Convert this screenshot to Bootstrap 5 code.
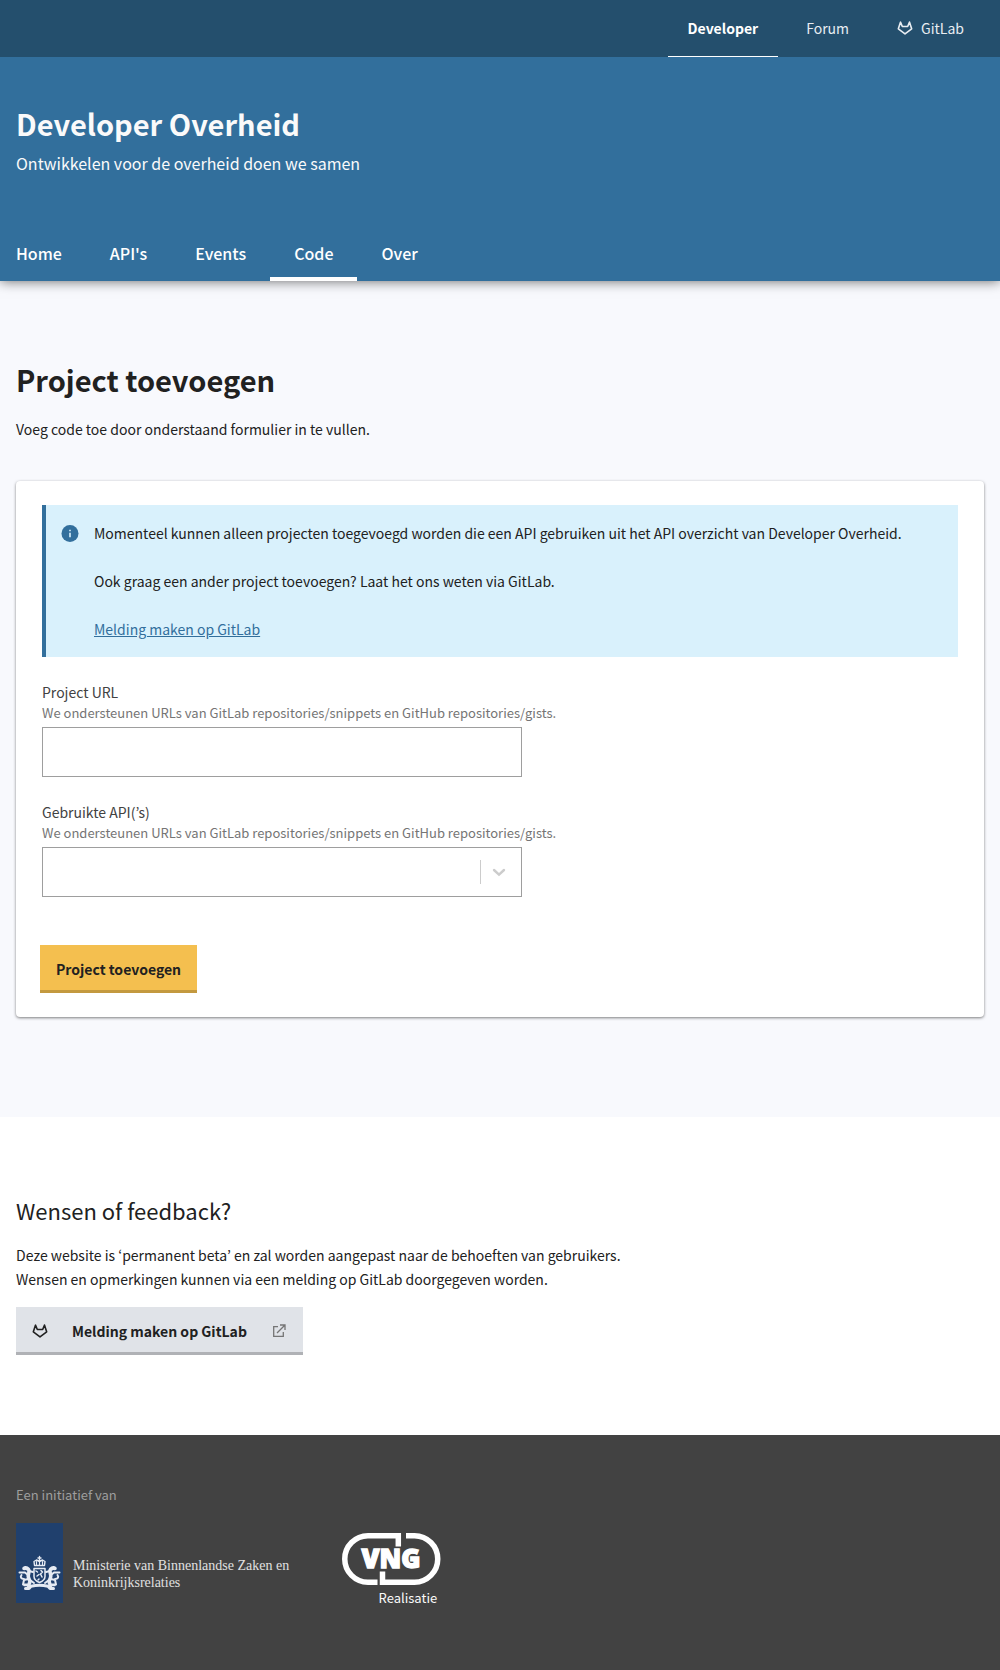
<!DOCTYPE html>
<html lang="nl">
<head>
<meta charset="utf-8">
<meta name="viewport" content="width=device-width, initial-scale=1">
<title>Project toevoegen – Developer Overheid</title>
<link href="https://cdn.jsdelivr.net/npm/bootstrap@5.3.0/dist/css/bootstrap.min.css" rel="stylesheet">
<style>
  body { font-family: "Noto Sans CJK JP", "Open Sans", sans-serif; font-size: 14px; line-height: 24px; color: #212121; background: #fff; }
  h1 { font-size: 29px; line-height: 36px; font-weight: 700; }
  h2 { font-size: 22px; line-height: 34px; font-weight: 400; }
  .site-top { background: #244f6d; position: relative; z-index: 1; }
  .site-top .nav-link { color: #e8edf2; padding: 16px 20px; border-bottom: 1px solid transparent; }
  .site-top .nav-link.active { color: #fff; font-weight: 600; border-color: #fff; }
  .site-header { background: #326f9c; color: #fafafa; box-shadow: 0 0 12px rgba(0,0,0,.6); padding-top: 48px; position: relative; }
  .tagline { font-size: 16px; line-height: 28px; margin-bottom: 48px; }
  .site-nav { margin: 0 -24px; }
  .site-nav .nav-link { color: #fff; font-size: 16px; font-weight: 500; padding: 16px 24px 12px; border-bottom: 4px solid transparent; }
  .site-nav .nav-link.active { border-color: #fff; }
  .site-main { background: #f8f9fd; padding: 80px 0 100px; }
  .page-title { margin-bottom: 20px; }
  .form-card { border-radius: 4px; box-shadow: 0 1px 3px rgba(0,0,0,.5); padding: 24px; background: #fff; }
  .form-body { padding: 0 2px; }
  .info-box { background: #d9f1fc; border-left: 4px solid #326f9c; padding: 16px; margin-bottom: 24px; }
  .info-box a { color: #326f9c; }
  .field-label { color: #424242; line-height: 22px; }
  .field-help { font-size: 13px; line-height: 20px; color: #757575; white-space: nowrap; }
  .field-box { max-width: 480px; }
  .field-box .form-control, .field-box .form-select { height: 50px; border: 1px solid #9e9e9e; border-radius: 0; background: #fff; }
  .select-mark { position: absolute; right: 12px; top: 13px; pointer-events: none; }
  .action { border: 0; border-bottom: 3px solid; border-radius: 0; font-size: 14px; font-weight: 600; line-height: 24px; color: #212121; padding: 12px 16px 9px; }
  .action-main, .action-main:hover { background: #f4bf4f; border-color: #c3993f; }
  .action-link, .action-link:hover { background: #e0e3e8; border-color: #b0b2b6; }
  .site-footer { background: #424242; padding: 48px 0 64px; }
  .initiative { font-size: 13px; color: #9e9e9e; margin-bottom: 16px; }
  .ministry { font-family: "Liberation Serif", serif; font-size: 14px; line-height: 17px; color: #e0e0e0; padding-top: 34px; margin-left: 10px; }
  .realisatie { font-size: 13px; line-height: 22px; color: #fafafa; padding-right: 4px; }
</style>
<script src="https://cdn.jsdelivr.net/npm/bootstrap@5.3.0/dist/js/bootstrap.bundle.min.js"></script>
</head>
<body>
<svg class="d-none">
  <symbol id="fox" viewBox="0 0 24 24"><path fill="none" stroke="currentColor" stroke-width="2.4" stroke-linejoin="round" d="M5.200 3.200 2 13.200 12 20.800 22 13.200 18.800 3.200 16 9.800H8z"/></symbol>
</svg>

<div class="site-top">
  <nav class="container-fluid px-3" aria-label="Sites">
    <ul class="nav justify-content-end gap-2">
      <li><a class="nav-link active" href="#">Developer</a></li>
      <li><a class="nav-link" href="#">Forum</a></li>
      <li><a class="nav-link d-flex align-items-center gap-2" href="#"><svg width="16" height="16"><use href="#fox"/></svg>GitLab</a></li>
    </ul>
  </nav>
</div>

<header class="site-header">
  <div class="container-fluid px-3">
    <h1 class="mb-2">Developer Overheid</h1>
    <p class="tagline">Ontwikkelen voor de overheid doen we samen</p>
    <nav aria-label="Hoofdmenu">
      <ul class="nav site-nav">
        <li><a class="nav-link" href="#">Home</a></li>
        <li><a class="nav-link" href="#">API's</a></li>
        <li><a class="nav-link" href="#">Events</a></li>
        <li><a class="nav-link active" href="#">Code</a></li>
        <li><a class="nav-link" href="#">Over</a></li>
      </ul>
    </nav>
  </div>
</header>

<main class="site-main">
  <div class="container-fluid px-3">
    <h1 class="page-title">Project toevoegen</h1>
    <p class="mb-0 pb-4">Voeg code toe door onderstaand formulier in te vullen.</p>
    <form class="form-card mt-3">
      <div class="form-body">
        <div class="info-box d-flex" role="note">
          <svg class="flex-shrink-0 mt-1" width="16" height="17" viewBox="0 0 16 16" overflow="visible"><circle cx="8" cy="8" r="8.500" fill="#326f9c"/><path stroke="#d9f1fc" stroke-width="1.600" d="M8 7.200v4.600M8 4.200v1.600"/></svg>
          <div class="ps-3">
            <p class="mb-4">Momenteel kunnen alleen projecten toegevoegd worden die een API gebruiken uit het API overzicht van Developer Overheid.</p>
            <p class="mb-4">Ook graag een ander project toevoegen? Laat het ons weten via GitLab.</p>
            <a href="#">Melding maken op GitLab</a>
          </div>
        </div>
        <div class="field-box mb-4">
          <label class="field-label d-block" for="url">Project URL</label>
          <div class="field-help mb-1" id="url-help">We ondersteunen URLs van GitLab repositories/snippets en GitHub repositories/gists.</div>
          <input class="form-control" id="url" type="text" aria-describedby="url-help">
        </div>
        <div class="field-box mb-5">
          <label class="field-label d-block" for="apis">Gebruikte API(’s)</label>
          <div class="field-help mb-1" id="api-help">We ondersteunen URLs van GitLab repositories/snippets en GitHub repositories/gists.</div>
          <div class="position-relative">
            <select class="form-select" id="apis" aria-describedby="api-help"><option value=""></option></select>
            <svg class="select-mark" width="30" height="24" fill="none" stroke="#ccc"><path d="M.5 0v24"/><path d="m14 10 5 4.600 5-4.600" stroke-width="2.400" stroke-linecap="round"/></svg>
          </div>
        </div>
      </div>
      <button class="btn action action-main" type="submit">Project toevoegen</button>
    </form>
  </div>
</main>

<section class="container-fluid px-3 pt-5">
  <h2 class="pt-4 mt-1 mb-3">Wensen of feedback?</h2>
  <p class="mb-3">Deze website is ‘permanent beta’ en zal worden aangepast naar de behoeften van gebruikers.<br>Wensen en opmerkingen kunnen via een melding op GitLab doorgegeven worden.</p>
  <a class="btn action action-link d-inline-flex align-items-center" href="#">
    <svg width="16" height="16" class="me-4"><use href="#fox"/></svg>
    <span>Melding maken op GitLab</span>
    <svg width="16" height="16" class="ms-4" viewBox="0 0 16 16" fill="none" stroke="#757575" stroke-width="1.300"><path d="M7 3.700H2.700v9.600h9.600V9M9 2h5v5M14 2 6 10"/></svg>
  </a>
  <div class="pb-5 mb-4 pt-2"></div>
</section>

<footer class="site-footer">
  <div class="container-fluid px-3">
    <p class="initiative">Een initiatief van</p>
    <div class="d-flex align-items-start">
      <svg class="flex-shrink-0" width="47" height="80" viewBox="0 0 47 80" role="img" aria-label="Rijksoverheid">
        <path fill="#20406d" d="M0 0h47v80H0z"/>
        <g fill="none" stroke="#e6ebf3" stroke-linecap="round" stroke-linejoin="round">
          <path stroke-width="1.400" d="M23.500 33.500v4M22 35h3M18.500 42.500 18 38.500l2.500-1.500 3 1.500 3-1.500L29 38.500l-.5 4z"/>
          <path stroke-width="1.200" d="M20.500 38.500v3M23.500 38v4M26.500 38.500v3"/>
          <path stroke-width="1.500" d="M18 45.500h11v8c0 3-3 5-5.500 6-2.500-1-5.500-3-5.500-6z"/>
          <path stroke-width="1.500" d="m20 48 1.500 1M25 47.500l1.500 1.500-2 2 1.500 3M21 53l2-1.500M23 56l-1 1"/>
          <g id="lion"><path stroke-width="3.600" d="M10.500 45.500c-1.500-1-2.500-.5-2.500 0 2-1.500 4.500-.3 5 2 .3 3-1.500 4.200-.5 7l1.500 4.200-1.500 4"/><path stroke-width="2" d="m13 48 4 1M12 52l-3-2.500H3.500M12 56l-4 1-1 4.500h4M8 56c-3 0-4-2-2.500-4M14 57l4 3"/></g>
          <use href="#lion" transform="matrix(-1 0 0 1 47 0)"/>
          <path stroke-width="3" d="M9.500 65.500H13l2-2.200c5.500-1.500 11.500-1.500 17 0l2 2.200h3.500"/>
          <path stroke-width="1.400" d="M8 62.500h6M33 62.500h6"/>
        </g>
      </svg>
      <div class="ministry">Ministerie van Binnenlandse Zaken en<br>Koninkrijksrelaties</div>
      <div class="ms-5 ps-1 pt-2 text-end">
        <svg class="d-block" width="100" height="56" viewBox="0 0 100 56" role="img" aria-label="VNG">
          <path fill="none" stroke="#fff" stroke-width="5.500" d="M57.300 15.500V4.700H27a23.200 23.200 0 0 0 0 46.500h9.500M41.500 40.500v10.700h32a23.200 23.200 0 0 0 0-46.500H65"/>
          <text x="50" y="37" fill="#fff" stroke="#fff" stroke-width="1.300" text-anchor="middle" font-family="Open Sans, sans-serif" font-weight="800" font-size="26">VNG</text>
        </svg>
        <div class="realisatie">Realisatie</div>
      </div>
    </div>
  </div>
</footer>
</body>
</html>
